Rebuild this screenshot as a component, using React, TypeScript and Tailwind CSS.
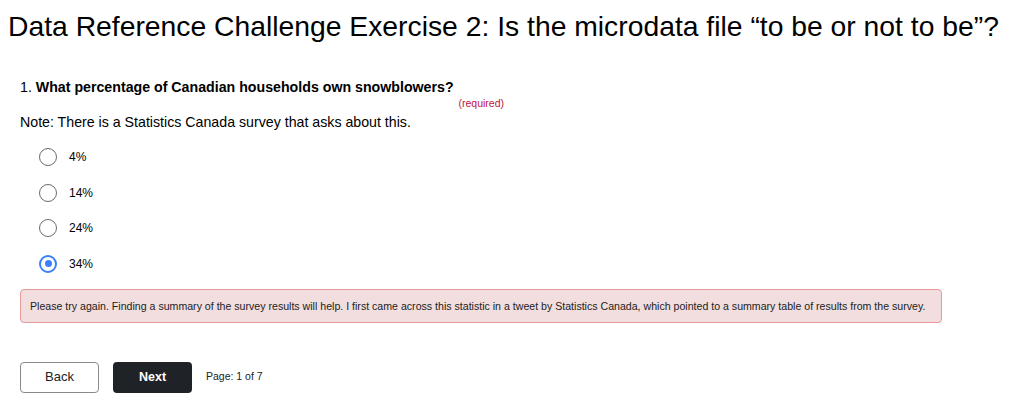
import React from "react";

const options = ["4%", "14%", "24%", "34%"];

const Radio = ({ checked }: { checked: boolean }) =>
  checked ? (
    <span className="flex h-[18px] w-[18px] items-center justify-center rounded-full border-2 border-[#3b82f6] bg-white">
      <span className="h-[7px] w-[7px] rounded-full bg-[#3b82f6]" />
    </span>
  ) : (
    <span className="h-[18px] w-[18px] rounded-full border-[1.5px] border-[#6b6b6b] bg-white" />
  );

const App = () => {
  return (
    <div className="h-[401px] w-[1021px] bg-white font-['Liberation_Sans',Arial,sans-serif] text-black">
      <h1 className="pl-[8px] pt-[8px] text-[28.3px] leading-[36px]">
        Data Reference Challenge Exercise 2: Is the microdata file “to be or not to be”?
      </h1>
      <div className="px-[20px]">
        <div className="mt-[35px] flex w-[484px] flex-col">
          <p className="text-[14.2px] leading-[16px]">
            1. <span className="font-bold">What percentage of Canadian households own snowblowers?</span>
          </p>
          <span className="mt-[2px] self-end text-[10.5px] leading-[13px] text-[#c0143c]">(required)</span>
        </div>
        <p className="mt-[4px] text-[14.2px] leading-[16px]">
          Note: There is a Statistics Canada survey that asks about this.
        </p>
        <div className="mt-[18px] flex flex-col gap-[17.5px] pl-[19px]">
          {options.map((o, i) => (
            <label key={o} className="flex items-center gap-[12px]">
              <Radio checked={i === 3} />
              <span className="text-[12px] leading-[18px]">{o}</span>
            </label>
          ))}
        </div>
        <div className="mt-[16px] w-[922px] whitespace-nowrap rounded-[4px] border border-[#e79a9c] bg-[#f2dede] px-[9px] py-[9px] text-[10.6px] leading-[14px] text-[#222]">
          Please try again. Finding a summary of the survey results will help. I first came across this statistic in a tweet by Statistics Canada, which pointed to a summary table of results from the survey.
        </div>
        <div className="mt-[39px] flex items-center">
          <button className="h-[31px] w-[79px] rounded-[4px] border border-[#8a8a8a] bg-white text-[13px] text-[#222]">
            Back
          </button>
          <button className="ml-[14px] h-[31px] w-[79px] rounded-[4px] bg-[#1f2226] text-[12.5px] font-bold text-white">
            Next
          </button>
          <span className="ml-[14px] text-[10.5px] text-[#222]">Page: 1 of 7</span>
        </div>
      </div>
    </div>
  );
};

export default App;
